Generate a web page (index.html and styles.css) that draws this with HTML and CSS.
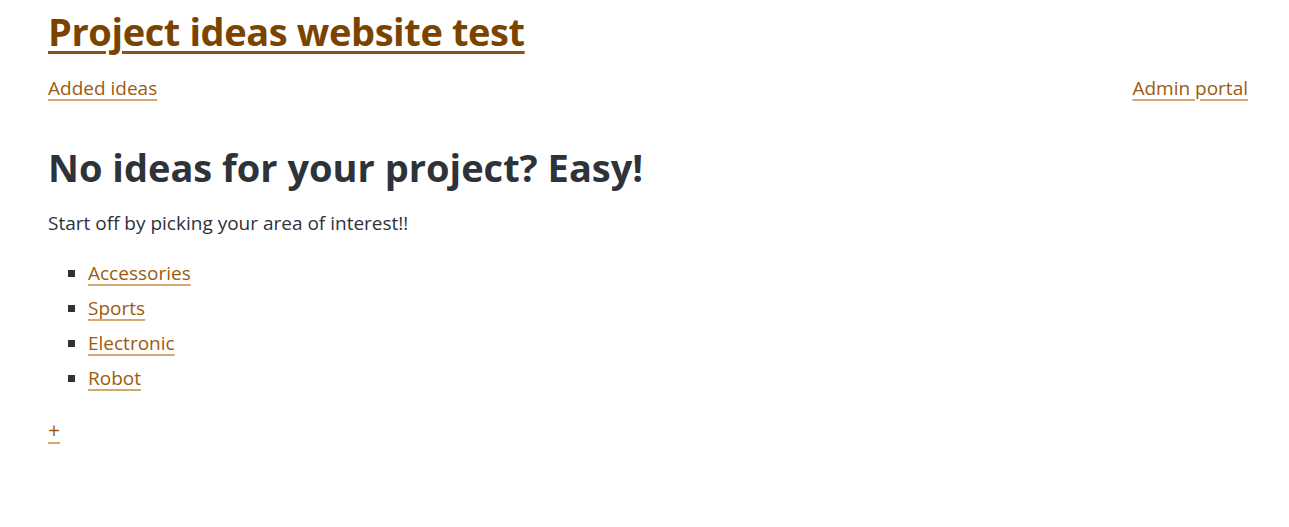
FILE: index.html
```html
<!DOCTYPE html>
<html lang="en">
<head>
<meta charset="utf-8">
<title>Project ideas website test</title>
<link rel="stylesheet" href="styles.css">
</head>
<body>
<div class="page">
  <header class="site-header">
    <h1 class="site-title"><a href="#">Project ideas website test</a></h1>
    <nav class="site-nav">
      <a href="#">Added ideas</a>
      <a href="#">Admin portal</a>
    </nav>
  </header>
  <main class="content">
    <h2 class="headline">No ideas for your project? Easy!</h2>
    <p class="intro">Start off by picking your area of interest!!</p>
    <ul class="areas">
      <li><a href="#">Accessories</a></li>
      <li><a href="#">Sports</a></li>
      <li><a href="#">Electronic</a></li>
      <li><a href="#">Robot</a></li>
    </ul>
    <a class="add" href="#">+</a>
  </main>
</div>
</body>
</html>
```

FILE: styles.css
```css
html, body {
  margin: 0;
  padding: 0;
  background: #ffffff;
}
body {
  font-family: "Open Sans", "Noto Sans", sans-serif;
  color: #2e3239;
  font-size: 19px;
  line-height: 28px;
}
.page {
  width: 1200px;
  padding: 0 0 0 48px;
}
a {
  color: #9e5a0c;
  text-decoration: underline;
  text-decoration-color: #d3a872;
  text-decoration-thickness: 2px;
  text-underline-offset: 4px;
}
.site-title {
  margin: 9px 0 0;
  font-size: 38px;
  line-height: 1.2;
  font-weight: 700;
  letter-spacing: -0.4px;
}
.site-title a {
  color: #7a4300;
  text-decoration-color: #8a5412;
  text-decoration-thickness: 3px;
  text-underline-offset: 5px;
}
.site-nav {
  display: flex;
  justify-content: space-between;
  margin-top: 19px;
}
.headline {
  margin: 43px 0 0;
  font-size: 38px;
  line-height: 1.2;
  font-weight: 700;
  color: #2e3239;
}
.intro {
  margin: 19px 0 0;
}
.areas {
  list-style: square;
  margin: 22px 0 0;
  padding-left: 40px;
}
.areas li + li {
  margin-top: 7px;
}
.areas li::marker {
  color: #2e3239;
}
.add {
  display: inline-block;
  margin-top: 24px;
  font-size: 21px;
}
```
